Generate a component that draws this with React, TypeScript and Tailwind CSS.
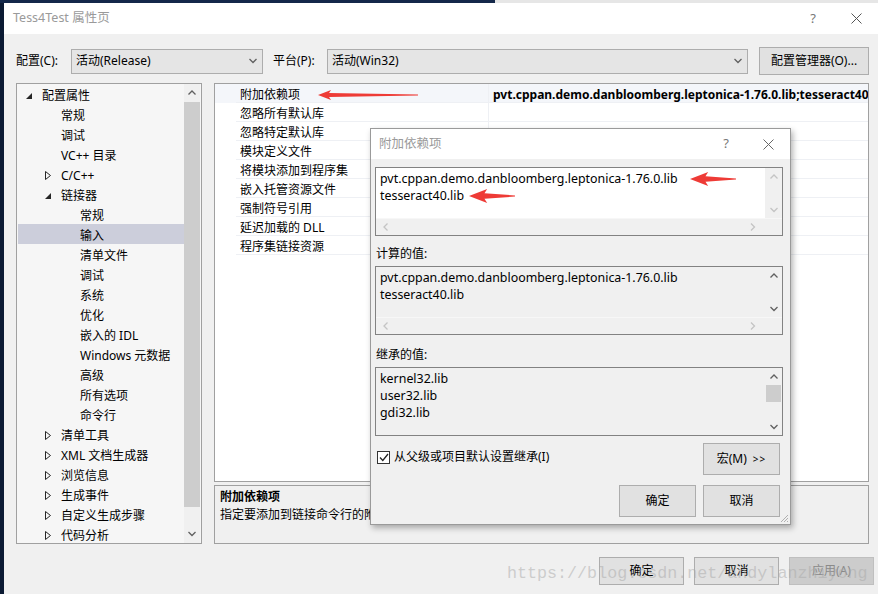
import React from "react";

const font = "font-['Noto_Sans','Noto_Sans_CJK_SC',sans-serif]";

type TreeItem = { t: string; l: 0 | 1 | 2; e?: "open" | "closed"; sel?: boolean };

const tree: TreeItem[] = [
  { t: "配置属性", l: 0, e: "open" },
  { t: "常规", l: 1 },
  { t: "调试", l: 1 },
  { t: "VC++ 目录", l: 1 },
  { t: "C/C++", l: 1, e: "closed" },
  { t: "链接器", l: 1, e: "open" },
  { t: "常规", l: 2 },
  { t: "输入", l: 2, sel: true },
  { t: "清单文件", l: 2 },
  { t: "调试", l: 2 },
  { t: "系统", l: 2 },
  { t: "优化", l: 2 },
  { t: "嵌入的 IDL", l: 2 },
  { t: "Windows 元数据", l: 2 },
  { t: "高级", l: 2 },
  { t: "所有选项", l: 2 },
  { t: "命令行", l: 2 },
  { t: "清单工具", l: 1, e: "closed" },
  { t: "XML 文档生成器", l: 1, e: "closed" },
  { t: "浏览信息", l: 1, e: "closed" },
  { t: "生成事件", l: 1, e: "closed" },
  { t: "自定义生成步骤", l: 1, e: "closed" },
  { t: "代码分析", l: 1, e: "closed" },
];

const indent = { 0: "pl-[9px]", 1: "pl-[28px]", 2: "pl-[47px]" };

const props = [
  "附加依赖项",
  "忽略所有默认库",
  "忽略特定默认库",
  "模块定义文件",
  "将模块添加到程序集",
  "嵌入托管资源文件",
  "强制符号引用",
  "延迟加载的 DLL",
  "程序集链接资源",
];

function Chev({ dir, color = "#606060" }: { dir: "up" | "down" | "left" | "right"; color?: string }) {
  const d = {
    up: "M0.5 4.5 L4 1 L7.5 4.5",
    down: "M0.5 1 L4 4.5 L7.5 1",
    left: "M4.5 0.5 L1 4 L4.5 7.5",
    right: "M1 0.5 L4.5 4 L1 7.5",
  }[dir];
  const vert = dir === "up" || dir === "down";
  return (
    <svg width={vert ? 8 : 6} height={vert ? 6 : 8} viewBox={vert ? "0 0 8 6" : "0 0 6 8"}>
      <path d={d} stroke={color} strokeWidth="1.3" fill="none" />
    </svg>
  );
}

function CloseX({ color = "#333" }: { color?: string }) {
  return (
    <svg width="11" height="11" viewBox="0 0 11 11">
      <path d="M0.5 0.5 L10.5 10.5 M10.5 0.5 L0.5 10.5" stroke={color} strokeWidth="1" />
    </svg>
  );
}

function RedArrow({ w, h }: { w: number; h: number }) {
  const m = h / 2;
  const hw = h * 1.3;
  const pts = [
    [0, m],
    [hw, 0],
    [hw * 0.85, m - h * 0.2],
    [w, m - 0.6],
    [w, m + 0.6],
    [hw * 0.85, m + h * 0.2],
    [hw, h],
  ]
    .map((p) => p.join(","))
    .join(" ");
  return (
    <svg width={w} height={h} viewBox={`0 0 ${w} ${h}`}>
      <polygon points={pts} fill="#ee3b36" />
    </svg>
  );
}

function Btn({ children, className = "" }: { children: React.ReactNode; className?: string }) {
  return (
    <div
      className={`flex items-center justify-center border border-[#adadad] bg-[#e1e1e1] text-[12px] text-black ${className}`}
    >
      {children}
    </div>
  );
}

function VScroll({ thumb, disabled }: { thumb?: boolean; disabled?: boolean }) {
  const c = disabled ? "#c4c4c4" : "#606060";
  return (
    <div className="w-[17px] bg-[#f0f0f0] flex flex-col items-center">
      <div className="h-[17px] flex items-center justify-center">
        <Chev dir="up" color={c} />
      </div>
      {thumb ? <div className="w-[15px] h-[17px] bg-[#cdcdcd]" /> : null}
      <div className="flex-1" />
      <div className="h-[17px] flex items-center justify-center">
        <Chev dir="down" color={c} />
      </div>
    </div>
  );
}

function EditBox({
  lines,
  white,
  hscroll,
  disabled,
  thumb,
  arrows,
}: {
  lines: string[];
  white?: boolean;
  hscroll?: boolean;
  disabled?: boolean;
  thumb?: boolean;
  arrows?: boolean;
}) {
  return (
    <div className="h-[69px] border border-[#828282] flex flex-col bg-[#f0f0f0]">
      <div className="flex flex-1 min-h-0">
        <div className={`flex-1 pl-[4px] pt-[2px] ${white ? "bg-white" : "bg-[#f0f0f0]"}`}>
          {lines.map((l, i) => (
            <div key={i} className="h-[17px] leading-[17px] text-[12.4px] text-black flex items-center gap-[12px]">
              <span>{l}</span>
              {arrows && i === 0 ? <RedArrow w={46} h={14} /> : null}
              {arrows && i === 1 ? (
                <span className="-ml-[7px]">
                  <RedArrow w={46} h={14} />
                </span>
              ) : null}
            </div>
          ))}
        </div>
        <VScroll disabled={disabled} thumb={thumb} />
      </div>
      {hscroll ? (
        <div className="h-[17px] flex items-center justify-between pl-[7px] pr-[26px] border-t border-[#f7f7f7]">
          <Chev dir="left" color="#c4c4c4" />
          <Chev dir="right" color="#c4c4c4" />
        </div>
      ) : null}
    </div>
  );
}

export default function App() {
  return (
    <div className={`w-[878px] h-[594px] overflow-hidden relative bg-[#0b1a33] ${font}`}>
      {/* top strip from the window behind */}
      <div className="h-[3px] flex">
        <div className="w-[495px] bg-[#14284a]" />
        <div className="flex-1 bg-[#e6e6e6]" />
      </div>

      <div className="ml-[4px] h-[591px] bg-[#f0f0f0] flex flex-col">
        {/* title bar */}
        <div className="h-[31px] bg-white flex items-center pl-[9px] pr-[16px] shrink-0">
          <span className="text-[12.5px] text-[#9a9a9a]">Tess4Test 属性页</span>
          <span className="ml-auto text-[13px] text-[#777] mr-[35px]">?</span>
          <CloseX color="#555" />
        </div>

        {/* config row */}
        <div className="flex items-center mt-[13px] pl-[12px] h-[28px] text-[12px] text-black">
          <span className="w-[55px]">配置(C):</span>
          <div className="w-[192px] h-[25px] border border-[#adadad] bg-[#e5e5e5] flex items-center pl-[4px] pr-[5px]">
            <span className="flex-1">活动(Release)</span>
            <Chev dir="down" />
          </div>
          <span className="ml-[10px] w-[54px]">平台(P):</span>
          <div className="w-[421px] h-[25px] border border-[#adadad] bg-[#e5e5e5] flex items-center pl-[4px] pr-[5px]">
            <span className="flex-1">活动(Win32)</span>
            <Chev dir="down" />
          </div>
          <Btn className="ml-[11px] w-[110px] h-[28px]">配置管理器(O)...</Btn>
        </div>

        {/* panels */}
        <div className="flex mt-[8px] pl-[12px] gap-[12px]">
          {/* tree */}
          <div className="w-[186px] h-[461px] border border-[#a0a0a0] bg-[#f6f6f6] flex overflow-hidden">
            <div className="flex-1 text-[12px] text-black">
              {tree.map((it, i) => (
                <div
                  key={i}
                  className={`h-[20px] pt-[3px] flex items-center ${indent[it.l]} ${it.sel ? "bg-[#cccedb] ml-[1px]" : ""}`}
                >
                  <span className="w-[16px] flex items-center">
                    {it.e === "open" ? (
                      <svg width="6" height="6" viewBox="0 0 6 6">
                        <polygon points="6,0 6,6 0,6" fill="#262626" />
                      </svg>
                    ) : it.e === "closed" ? (
                      <svg width="6" height="9" viewBox="0 0 6 9">
                        <polygon points="0.5,0.5 5.5,4.5 0.5,8.5" fill="none" stroke="#262626" strokeWidth="1" />
                      </svg>
                    ) : null}
                  </span>
                  <span className={it.sel ? "-ml-[1px]" : ""}>{it.t}</span>
                </div>
              ))}
            </div>
            <div className="w-[16px] mr-[1px] flex flex-col bg-[#f0f0f0]">
              <div className="h-[18px] flex items-center justify-center">
                <Chev dir="up" />
              </div>
              <div className="h-[405px] bg-[#cdcdcd]" />
              <div className="flex-1" />
              <div className="h-[18px] flex items-center justify-center">
                <Chev dir="down" />
              </div>
            </div>
          </div>

          {/* grid + description */}
          <div className="w-[655px] flex flex-col gap-[3px]">
            <div className="h-[399px] border border-[#a0a0a0] bg-white overflow-hidden">
              {props.map((p, i) => (
                <div key={i} className={`h-[19px] flex text-[12px] ${i === 0 ? "bg-[#f4f6fa]" : ""}`}>
                  <div className="w-[21px]" />
                  <div className="w-[252px] pl-[4px] pt-[3px] flex items-center border-b border-[#eef0f4] gap-[18px]">
                    <span>{p}</span>
                    {i === 0 ? <RedArrow w={100} h={10} /> : null}
                  </div>
                  <div className="flex-1 border-b border-l border-[#eef0f4] pl-[4px] pt-[3px] flex items-center overflow-hidden whitespace-nowrap">
                    {i === 0 ? (
                      <span className="font-bold">pvt.cppan.demo.danbloomberg.leptonica-1.76.0.lib;tesseract40.lib</span>
                    ) : null}
                  </div>
                </div>
              ))}
            </div>
            <div className="h-[59px] border border-[#a0a0a0] pl-[5px] pt-[2px] text-[12px] leading-[18px] text-black">
              <div className="font-bold">附加依赖项</div>
              <div>指定要添加到链接命令行的附加项，例如 kernel32.lib</div>
            </div>
          </div>
        </div>

        {/* bottom buttons */}
        <div className="flex mt-[13px] pl-[595px] gap-[10px]">
          <Btn className="w-[85px] h-[28px]">确定</Btn>
          <Btn className="w-[85px] h-[28px]">取消</Btn>
          <Btn className="w-[85px] h-[28px] !bg-[#cccccc] !border-[#bfbfbf] !text-[#8a8a8a]">应用(A)</Btn>
        </div>
      </div>

      {/* child dialog */}
      <div className="absolute left-[370px] top-[128px] w-[421px] h-[397px] bg-[#f0f0f0] border border-[#9a9a9a] shadow-[2px_3px_6px_rgba(0,0,0,0.3)] flex flex-col">
        <div className="h-[30px] bg-white flex items-center pl-[8px] pr-[16px] shrink-0">
          <span className="text-[12.5px] text-[#9a9a9a]">附加依赖项</span>
          <span className="ml-auto text-[13px] text-[#777] mr-[34px]">?</span>
          <CloseX color="#666" />
        </div>
        <div className="pl-[4px] pr-[7px] flex flex-col text-[12px] text-black">
          <div className="mt-[8px]">
            <EditBox
              white
              hscroll
              disabled
              arrows
              lines={["pvt.cppan.demo.danbloomberg.leptonica-1.76.0.lib", "tesseract40.lib"]}
            />
          </div>
          <div className="mt-[9px] h-[17px] leading-[17px] pl-[1px]">计算的值:</div>
          <div className="mt-[4px]">
            <EditBox hscroll lines={["pvt.cppan.demo.danbloomberg.leptonica-1.76.0.lib", "tesseract40.lib"]} />
          </div>
          <div className="mt-[11px] h-[17px] leading-[17px] pl-[1px]">继承的值:</div>
          <div className="mt-[4px]">
            <EditBox thumb lines={["kernel32.lib", "user32.lib", "gdi32.lib"]} />
          </div>
          <div className="mt-[7px] flex items-start pr-[3px]">
            <div className="flex items-center mt-[5px] pl-[2px] gap-[4px]">
              <div className="w-[13px] h-[13px] border border-[#333] bg-white flex items-center justify-center">
                <svg width="10" height="9" viewBox="0 0 10 9">
                  <path d="M1 4.5 L3.8 7.5 L9 1" stroke="#222" strokeWidth="1.3" fill="none" />
                </svg>
              </div>
              <span>从父级或项目默认设置继承(I)</span>
            </div>
            <Btn className="ml-auto w-[77px] h-[32px]">
              <span>宏(M)</span>
              <span className="ml-[6px] text-[10px] tracking-[1px]">&gt;&gt;</span>
            </Btn>
          </div>
          <div className="mt-[10px] flex justify-end gap-[7px] pr-[3px]">
            <Btn className="w-[77px] h-[32px]">确定</Btn>
            <Btn className="w-[77px] h-[32px]">取消</Btn>
          </div>
        </div>
        <svg className="absolute right-[1px] bottom-[1px]" width="10" height="10" viewBox="0 0 10 10">
          <path d="M9 2 L2 9 M9 5 L5 9 M9 8 L8 9" stroke="#b0b0b0" strokeWidth="1" />
        </svg>
      </div>

      {/* watermark */}
      <div className="absolute left-[507px] top-[561px] pointer-events-none font-['Liberation_Mono',monospace] text-[16.7px] text-[#a8a8a8]/50 whitespace-nowrap">
        https://blog.csdn.net/andylanzhiyong
      </div>
    </div>
  );
}
